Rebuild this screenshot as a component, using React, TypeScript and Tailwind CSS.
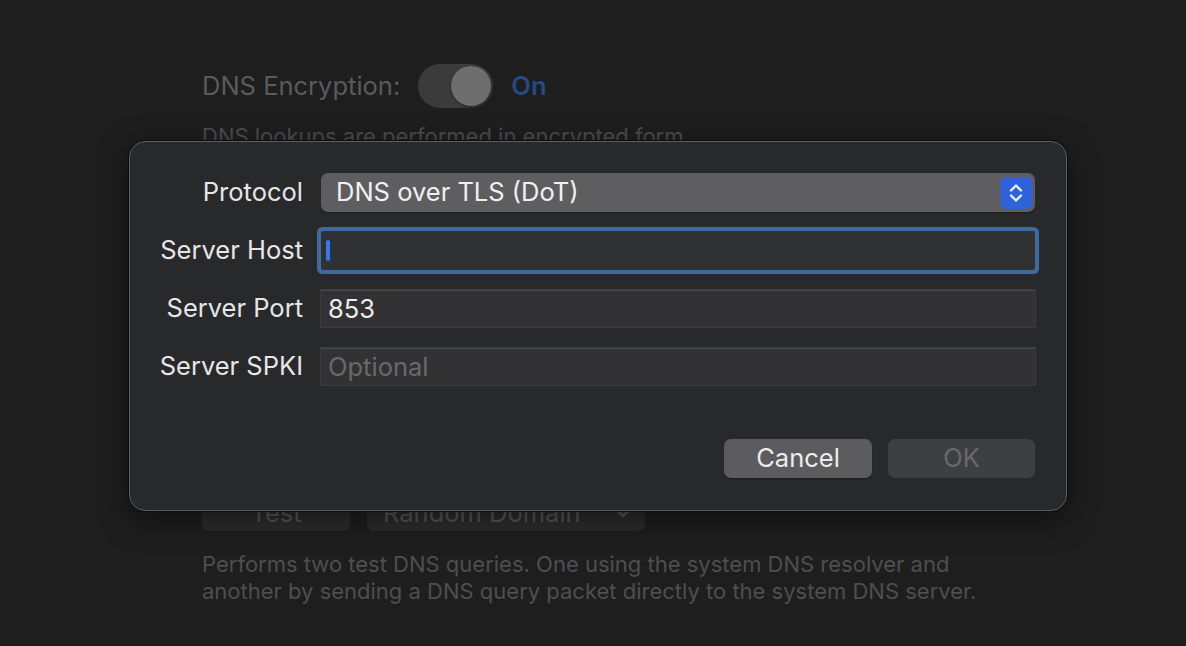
import { ChevronDown } from 'lucide-react'

const FONT = { fontFamily: 'Inter, "Noto Sans", sans-serif' }

function Stepper() {
  return (
    <div className="flex h-[32px] w-[32px] items-center justify-center rounded-[6px] bg-[#2f63da]">
      <svg width="16" height="24" viewBox="0 0 16 24" fill="none">
        <path d="M3 9.5 L8 4.5 L13 9.5" stroke="#e8eefc" strokeWidth="2.4" strokeLinecap="round" strokeLinejoin="round" />
        <path d="M3 14.5 L8 19.5 L13 14.5" stroke="#e8eefc" strokeWidth="2.4" strokeLinecap="round" strokeLinejoin="round" />
      </svg>
    </div>
  )
}

function Row({ label, children }: { label: string; children: React.ReactNode }) {
  return (
    <div className="flex h-[39px] items-center">
      <div className="w-[173px] shrink-0 text-right text-[25.5px] text-[#e6e6e6]">{label}</div>
      <div className="ml-[18px] flex h-full flex-1 items-center">{children}</div>
    </div>
  )
}

export default function App() {
  return (
    <div className="relative h-[646px] w-[1186px] overflow-hidden bg-[#1e1e1f]" style={FONT}>
      {/* background preferences pane (dimmed) */}
      <div className="pl-[202px] pt-[64px]">
        <div className="flex items-center">
          <span className="text-[25.5px] text-[#5b5b5c]">DNS Encryption:</span>
          <div className="ml-[18px] flex h-[44px] w-[75px] items-center justify-end rounded-full bg-[#3b3b3c] pr-[2px]">
            <div className="h-[40px] w-[40px] rounded-full bg-[#6e6e6f] shadow-[0_1px_2px_rgba(0,0,0,0.5)]" />
          </div>
          <span className="ml-[18px] text-[25.5px] font-semibold text-[#254a85]">On</span>
        </div>
        <p className="mt-[12px] text-[22px] text-[#4c4c4d]">DNS lookups are performed in encrypted form.</p>
        <div className="mt-[342px] flex gap-[17px]">
          <div className="flex h-[36px] w-[148px] items-center justify-center rounded-[7px] bg-[#2c2c2d] text-[25.5px] text-[#575758]">
            Test
          </div>
          <div className="flex h-[36px] w-[278px] items-center justify-between rounded-[7px] bg-[#2c2c2d] pl-[16px] pr-[10px] text-[25.5px] text-[#575758]">
            <span>Random Domain</span>
            <ChevronDown size={24} strokeWidth={3} color="#555556" />
          </div>
        </div>
        <p className="mt-[20px] text-[22px] leading-[27px] text-[#4e4e4f]">
          Performs two test DNS queries. One using the system DNS resolver and
          <br />
          another by sending a DNS query packet directly to the system DNS server.
        </p>
      </div>

      {/* sheet */}
      <div className="absolute left-[129px] top-[141px] flex h-[370px] w-[938px] flex-col rounded-[16px] border border-[#5c5c5e] bg-[#28292b] pr-[31px] pt-[31px] shadow-[0_0_0_1px_#0e0e0e,0_8px_30px_rgba(0,0,0,0.5)]">
        <div className="flex flex-col gap-[19px]">
          <Row label="Protocol">
            <div className="flex h-[39px] flex-1 items-center justify-between rounded-[7px] bg-[#5e5e60] pl-[15px] pr-[3px] shadow-[0_1px_1px_rgba(0,0,0,0.3)]">
              <span className="text-[25.5px] text-[#f0f0f0]">DNS over TLS (DoT)</span>
              <Stepper />
            </div>
          </Row>
          <Row label="Server Host">
            <div className="flex h-[39px] flex-1 items-center rounded-[2px] bg-[#303133] pl-[5px] shadow-[0_0_0_4px_#3f6b9c]">
              <div className="h-[21px] w-[4px] rounded-full bg-[#3478f6]" />
            </div>
          </Row>
          <Row label="Server Port">
            <div className="flex h-[37px] flex-1 items-center border-t border-[#4a4a4c] bg-[#323234] pl-[7px] text-[25.5px] text-[#ededed] shadow-[0_0_0_1px_#3c3c3e]">
              853
            </div>
          </Row>
          <Row label="Server SPKI">
            <div className="flex h-[37px] flex-1 items-center border-t border-[#4a4a4c] bg-[#323234] pl-[7px] text-[25.5px] text-[#69696b] shadow-[0_0_0_1px_#3c3c3e]">
              Optional
            </div>
          </Row>
        </div>
        <div className="mt-auto mb-[32px] flex justify-end gap-[16px]">
          <div className="flex h-[39px] w-[148px] items-center justify-center rounded-[7px] bg-[#5c5c5e] text-[25.5px] text-[#ececec] shadow-[0_1px_1px_rgba(0,0,0,0.3)]">
            Cancel
          </div>
          <div className="flex h-[39px] w-[147px] items-center justify-center rounded-[7px] bg-[#3e3f41] text-[25.5px] text-[#69696b]">
            OK
          </div>
        </div>
      </div>
    </div>
  )
}
